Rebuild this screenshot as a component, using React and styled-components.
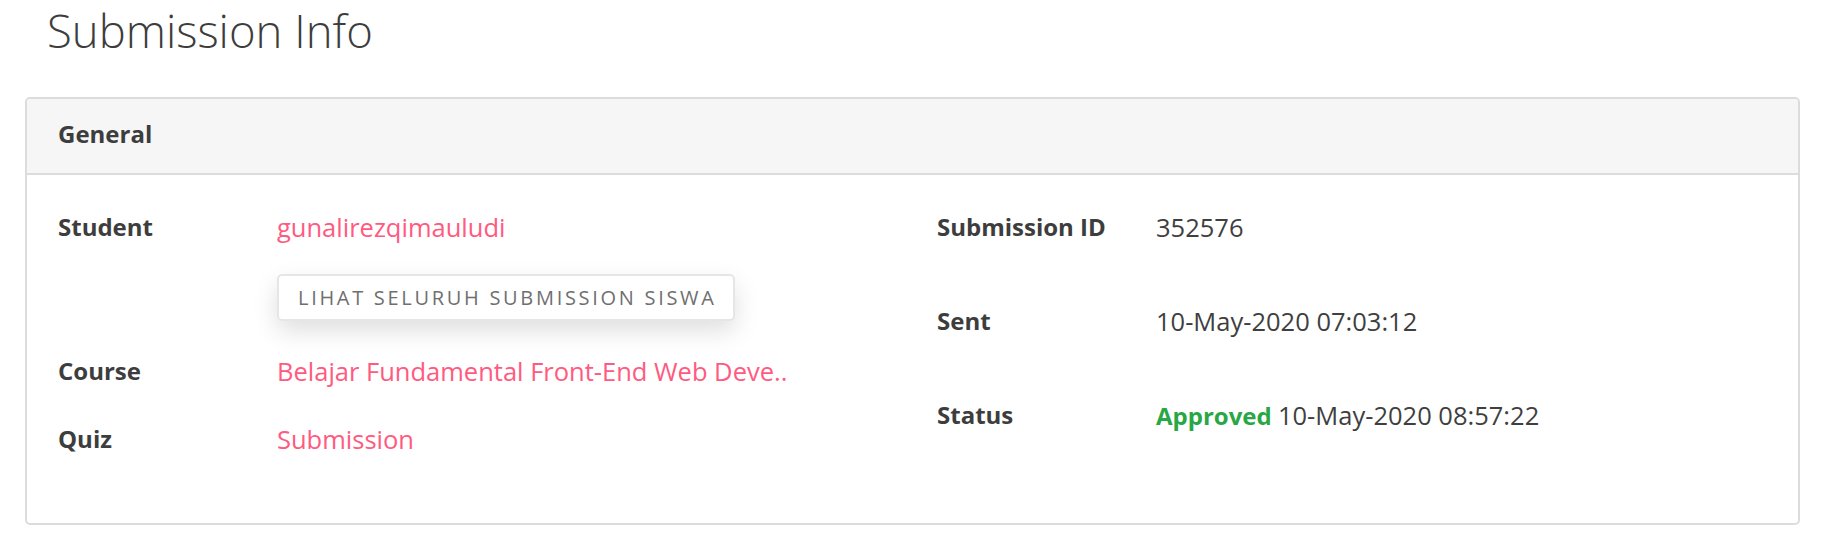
import styled, { createGlobalStyle } from "styled-components";

const GlobalStyle = createGlobalStyle`
  body {
    margin: 0;
    background: #fff;
    font-family: "Open Sans", "Liberation Sans", sans-serif;
    color: #3d3d3d;
  }
`;

const leftRows = [
  { label: "Student", value: "gunalirezqimauludi", button: "Lihat seluruh submission siswa" },
  { label: "Course", value: "Belajar Fundamental Front-End Web Deve.." },
  { label: "Quiz", value: "Submission" },
];

const rightRows = [
  { label: "Submission ID", value: "352576" },
  { label: "Sent", value: "10-May-2020 07:03:12" },
  { label: "Status", status: "Approved", value: "10-May-2020 08:57:22" },
];

const Page = styled.div`
  padding: 4px 30px 16px 25px;
`;

const Title = styled.h1`
  margin: 0 0 41px 22px;
  font-size: 45.5px;
  line-height: 52px;
  font-weight: 300;
  color: #3d3d3d;
`;

const Card = styled.section`
  border: 2px solid #dcdcdc;
  border-radius: 5px;
  overflow: hidden;
`;

const CardHeader = styled.div`
  background: #f6f6f6;
  border-bottom: 2px solid #dcdcdc;
  padding: 17px 31px 21px;
  font-size: 24px;
  line-height: 36px;
  font-weight: 700;
  color: #3d3d3d;
`;

const CardBody = styled.div`
  display: grid;
  grid-template-columns: 879px 1fr;
  padding: 34px 31px 66px;
`;

const Column = styled.div`
  display: flex;
  flex-direction: column;
  gap: ${(p) => p.$gap}px;
`;

const Row = styled.div`
  display: grid;
  grid-template-columns: 219px 1fr;
  align-items: start;
`;

const Label = styled.div`
  font-size: 24px;
  line-height: 36px;
  font-weight: 700;
  color: #3d3d3d;
`;

const Value = styled.div`
  font-size: 25.5px;
  line-height: 36px;
  color: #3f3f3f;
  display: flex;
  flex-direction: column;
  align-items: flex-start;
`;

const Link = styled.a`
  color: #ff5a80;
  text-decoration: none;
  cursor: pointer;
`;

const Approved = styled.span`
  color: #28a745;
  font-size: 24px;
  font-weight: 700;
`;

const GhostButton = styled.button`
  margin-top: 29px;
  width: 458px;
  height: 47px;
  padding: 0 0 0 19px;
  text-align: left;
  background: #fff;
  border: 2px solid #e6e6e6;
  border-radius: 5px;
  box-shadow: 0 10px 24px rgba(0, 0, 0, 0.13);
  font-family: "Open Sans", "Liberation Sans", sans-serif;
  font-size: 20px;
  letter-spacing: 2.7px;
  text-transform: uppercase;
  white-space: nowrap;
  color: #6f6f6f;
  cursor: pointer;
`;

const App = () => {
  return (
    <Page>
      <GlobalStyle />
      <Title>Submission Info</Title>
      <Card>
        <CardHeader>General</CardHeader>
        <CardBody>
          <Column $gap={32}>
            {leftRows.map((r) => (
              <Row key={r.label}>
                <Label>{r.label}</Label>
                <Value>
                  <Link>{r.value}</Link>
                  {r.button && <GhostButton>{r.button}</GhostButton>}
                </Value>
              </Row>
            ))}
          </Column>
          <Column $gap={58}>
            {rightRows.map((r) => (
              <Row key={r.label}>
                <Label>{r.label}</Label>
                <Value>
                  <span>
                    {r.status && <Approved>{r.status} </Approved>}
                    {r.value}
                  </span>
                </Value>
              </Row>
            ))}
          </Column>
        </CardBody>
      </Card>
    </Page>
  );
};

export default App;
